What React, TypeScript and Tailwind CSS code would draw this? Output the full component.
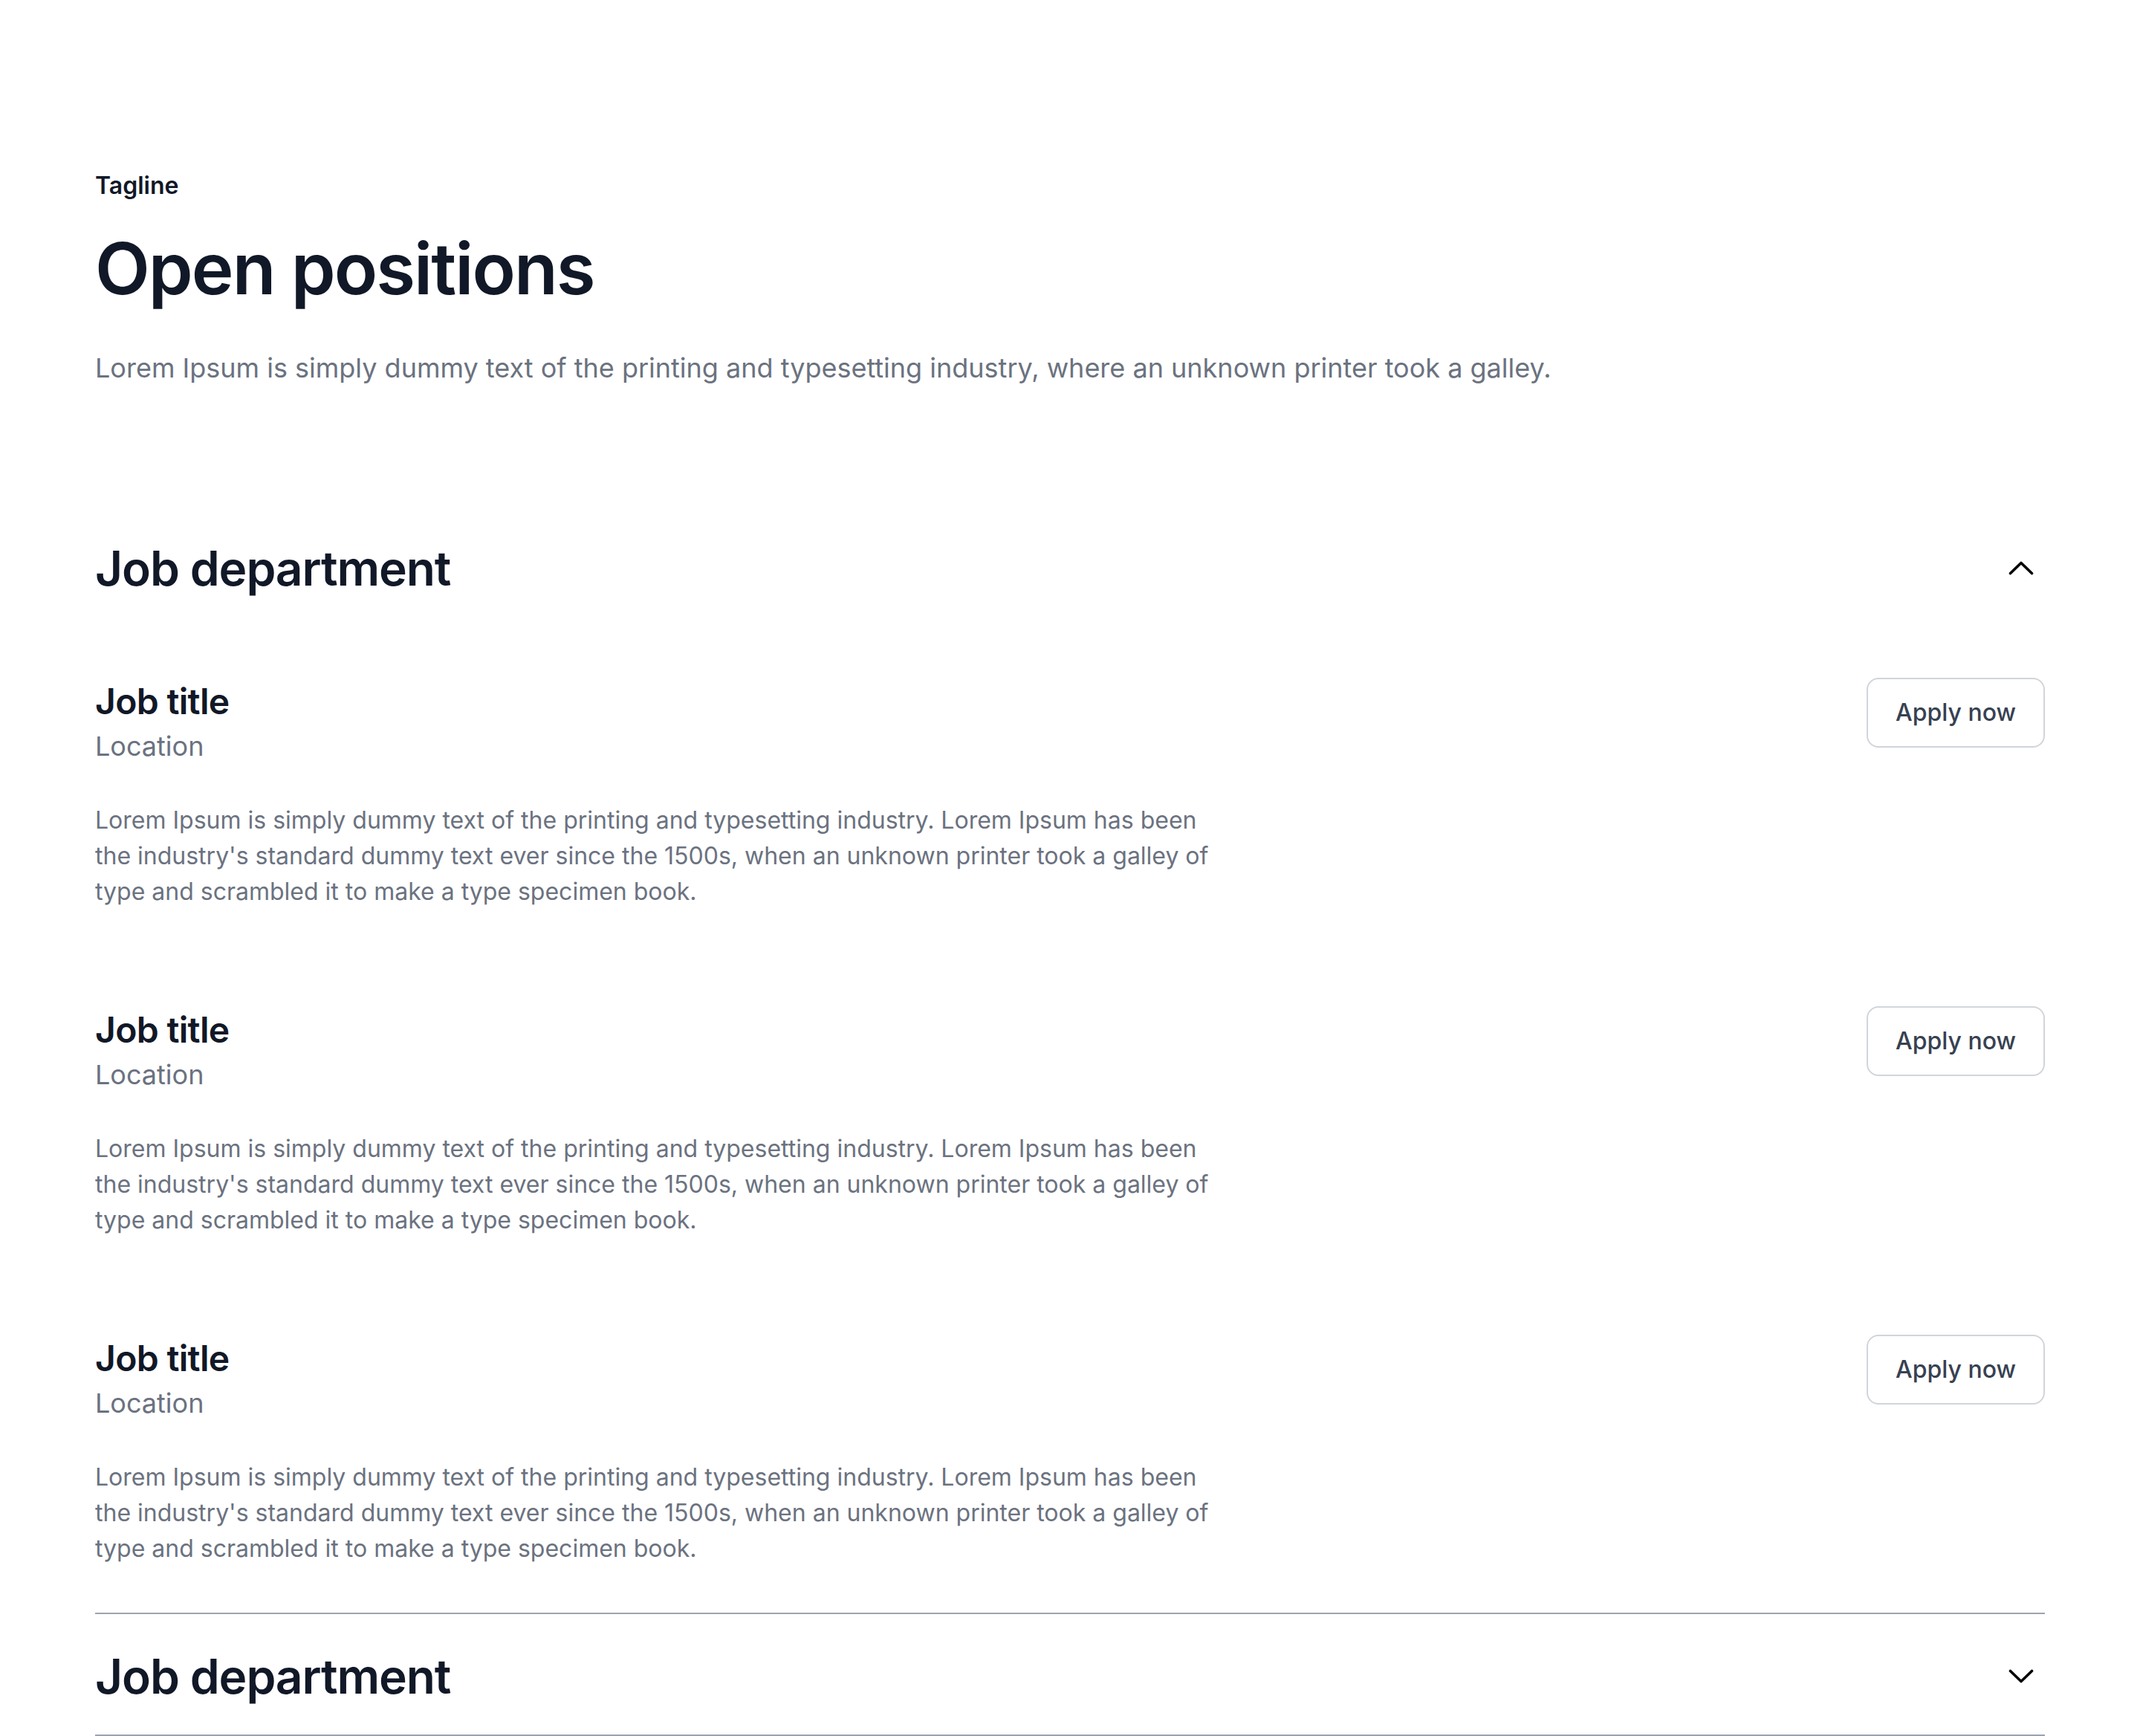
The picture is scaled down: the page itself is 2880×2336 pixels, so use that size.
import React from "react";

const body =
  "Lorem Ipsum is simply dummy text of the printing and typesetting industry. Lorem Ipsum has been the industry's standard dummy text ever since the 1500s, when an unknown printer took a galley of type and scrambled it to make a type specimen book.";

function ChevronUp() {
  return (
    <svg width="34" height="19" viewBox="0 0 34 19" fill="none">
      <polyline
        points="2.5,16.5 17,2.5 31.5,16.5"
        stroke="#000"
        strokeWidth="3.6"
        strokeLinecap="round"
        strokeLinejoin="round"
      />
    </svg>
  );
}

function ChevronDown() {
  return (
    <svg width="34" height="19" viewBox="0 0 34 19" fill="none">
      <polyline
        points="2.5,2.5 17,16.5 31.5,2.5"
        stroke="#000"
        strokeWidth="3.6"
        strokeLinecap="round"
        strokeLinejoin="round"
      />
    </svg>
  );
}

function Job() {
  return (
    <div className="flex items-start justify-between">
      <div className="flex flex-col">
        <h3 className="text-[48px] leading-[64px] font-semibold tracking-[-0.014em] text-[#111827]">Job title</h3>
        <div className="text-[36px] leading-[56px] text-[#6b7280]">Location</div>
        <p className="mt-[48px] max-w-[1536px] text-[32px] leading-[48px] text-[#6b7280]">{body}</p>
      </div>
      <button className="flex h-[94px] w-[240px] shrink-0 items-center justify-center rounded-[16px] border-2 border-[#d1d5db] bg-white text-[32px] font-medium text-[#374151]">
        Apply now
      </button>
    </div>
  );
}

export default function App() {
  return (
    <div className="min-h-screen bg-white px-[128px] pt-[226px] font-['Inter',sans-serif] antialiased">
      <div className="text-[32px] leading-[48px] font-semibold text-[#111827]">Tagline</div>
      <h1 className="mt-[30px] text-[96px] leading-[1.2] font-semibold tracking-[-0.02em] text-[#111827]">Open positions</h1>
      <p className="mt-[48px] text-[36px] leading-[56px] text-[#6b7280]">
        Lorem Ipsum is simply dummy text of the printing and typesetting industry, where an unknown printer took a galley.
      </p>

      <div className="mt-[160px] flex flex-col">
        <div className="border-b-2 border-[#9ca3af]">
          <div className="flex items-center justify-between py-[43px]">
            <h2 className="text-[64px] leading-[77px] font-semibold tracking-[-0.017em] text-[#111827]">Job department</h2>
            <div className="mr-[15px] flex items-center">
              <ChevronUp />
            </div>
          </div>
          <div className="flex flex-col gap-[130px] pt-[66px] pb-[62px]">
            <Job />
            <Job />
            <Job />
          </div>
        </div>
        <div className="border-b-2 border-[#9ca3af]">
          <div className="flex items-center justify-between pt-[45px] pb-[40px]">
            <h2 className="text-[64px] leading-[77px] font-semibold tracking-[-0.017em] text-[#111827]">Job department</h2>
            <div className="mr-[15px] flex items-center">
              <ChevronDown />
            </div>
          </div>
        </div>
      </div>
    </div>
  );
}
